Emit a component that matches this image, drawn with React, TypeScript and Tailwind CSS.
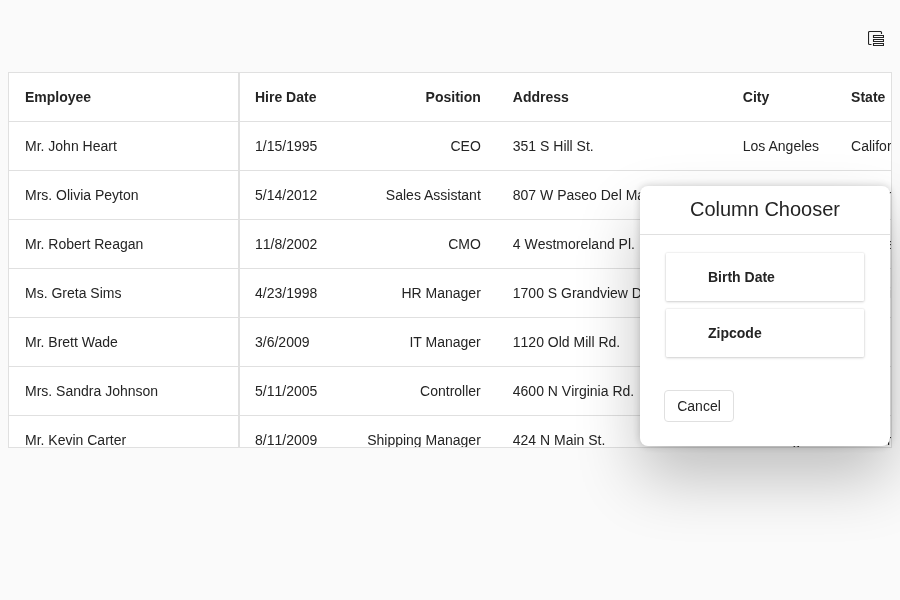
const employees = [
  ['Mr. John Heart', '1/15/1995', 'CEO', '351 S Hill St.', 'Los Angeles', 'California'],
  ['Mrs. Olivia Peyton', '5/14/2012', 'Sales Assistant', '807 W Paseo Del Mar', 'Los Angeles', 'California'],
  ['Mr. Robert Reagan', '11/8/2002', 'CMO', '4 Westmoreland Pl.', 'Bentonville', 'Arkansas'],
  ['Ms. Greta Sims', '4/23/1998', 'HR Manager', '1700 S Grandview Dr.', 'Atlanta', 'Georgia'],
  ['Mr. Brett Wade', '3/6/2009', 'IT Manager', '1120 Old Mill Rd.', 'Boise', 'Idaho'],
  ['Mrs. Sandra Johnson', '5/11/2005', 'Controller', '4600 N Virginia Rd.', 'Beaver', 'Utah'],
  ['Mr. Kevin Carter', '8/11/2009', 'Shipping Manager', '424 N Main St.', 'San Diego', 'California'],
];

const headers = ['Employee', 'Hire Date', 'Position', 'Address', 'City', 'State'];

const cellStyles = [
  'w-[231px] border-r-2 border-[#e0e0e0] pl-4',
  'w-[111px] pl-[15px] [font-kerning:none]',
  'w-[145.8px] pr-4 text-right',
  'w-[230px] pl-4 [font-kerning:none]',
  'w-[108.3px] pl-4',
  'w-[120px] pl-4',
];

function Row({ cells, header = false }: { cells: string[]; header?: boolean }) {
  return (
    <div className={header ? 'flex h-[49px] w-max font-bold' : 'flex h-[49px] w-max'}>
      {cells.map((cell, i) => (
        <div key={i} className={`${cellStyles[i]} shrink-0 whitespace-nowrap`}>
          {cell}
        </div>
      ))}
    </div>
  );
}

function ColumnChooserIcon() {
  return (
    <svg width="16" height="16" viewBox="0 0 16 16" fill="none" stroke="#242424" strokeWidth="1.15">
      <path d="M13.5 3V1.5a1 1 0 0 0-1-1h-11a1 1 0 0 0-1 1v11a1 1 0 0 0 1 1H3.5" />
      <path strokeWidth="1.1" d="M5.5 4.5h10v2h-10zM5.5 8.5h10v2h-10zM5.5 12.5h10v2h-10z" />
    </svg>
  );
}

function ColumnChooser() {
  return (
    <div className="absolute top-[186px] left-[640px] h-[260px] w-[250px] rounded-lg bg-white shadow-[0_0_8px_rgba(0,0,0,0.2),0_32px_64px_rgba(0,0,0,0.24)]">
      <div className="h-[49px] border-b border-[#e0e0e0] text-center text-xl leading-[46px] will-change-transform">
        Column Chooser
      </div>
      <div className="flex flex-col gap-2 px-[26px] pt-[18px] font-bold">
        {['Birth Date', 'Zipcode'].map((name) => (
          <div
            key={name}
            className="h-12 rounded-[1px] bg-white pl-[42px] leading-[48px] shadow-[0_0_2px_rgba(0,0,0,0.14),0_1px_3px_rgba(0,0,0,0.16)]"
          >
            <div className="will-change-transform">{name}</div>
          </div>
        ))}
      </div>
      <button className="mt-[33px] ml-6 flex h-8 w-[70px] items-center justify-center rounded border border-[#e0e0e0] will-change-transform">
        Cancel
      </button>
    </div>
  );
}

export default function App() {
  return (
    <div className="relative h-[600px] w-[900px] overflow-hidden bg-[#fafafa] px-2 font-['Liberation_Sans',Arial,sans-serif] text-sm text-[#242424] antialiased">
      <div className="flex h-[72px] justify-end pt-[31px] pr-2">
        <ColumnChooserIcon />
      </div>
      <div className="h-[376px] overflow-hidden border border-[#e0e0e0] bg-white leading-[48px]">
        <div className="w-max divide-y divide-[#e0e0e0] will-change-transform">
          <div className="h-[49px]">
            <Row cells={headers} header />
          </div>
          {employees.map((row) => (
            <div key={row[0]} className="h-[49px]">
              <Row cells={row} />
            </div>
          ))}
        </div>
      </div>
      <ColumnChooser />
    </div>
  );
}
